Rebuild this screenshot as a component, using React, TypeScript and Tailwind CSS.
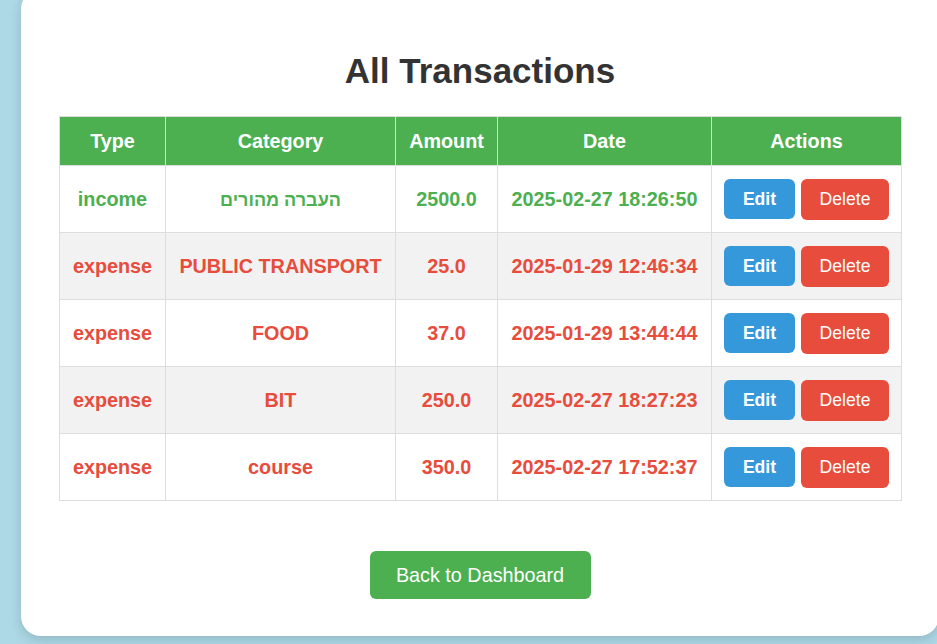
import React from "react";

type Tx = { type: "income" | "expense"; category: string; amount: string; date: string };

const rows: Tx[] = [
  { type: "income", category: "העברה מהורים", amount: "2500.0", date: "2025-02-27 18:26:50" },
  { type: "expense", category: "PUBLIC TRANSPORT", amount: "25.0", date: "2025-01-29 12:46:34" },
  { type: "expense", category: "FOOD", amount: "37.0", date: "2025-01-29 13:44:44" },
  { type: "expense", category: "BIT", amount: "250.0", date: "2025-02-27 18:27:23" },
  { type: "expense", category: "course", amount: "350.0", date: "2025-02-27 17:52:37" },
];

const isHebrew = (s: string) => /[\u0590-\u05FF]/.test(s);

export default function App() {
  return (
    <div
      className="h-[644px] w-[937px] overflow-hidden bg-[#add8e6]"
      style={{ fontFamily: '"Liberation Sans", Arial, "DejaVu Sans", sans-serif' }}
    >
      <div className="ml-[21px] mt-[-11px] w-[918px] rounded-[20px] bg-white px-[38px] pb-[37px] pt-[62px] shadow-[0_4px_12px_rgba(0,0,0,0.15)]">
        <h2 className="mb-[25px] text-center text-[35px] font-bold leading-[40px] text-[#333333]">
          All Transactions
        </h2>
        <table className="w-[842px] table-fixed border-collapse text-[19.8px] font-bold">
          <thead>
            <tr className="h-[49px] bg-[#4caf50] text-white">
              <th className="w-[106px] border border-[#dddddd] p-0 pt-[2px]">Type</th>
              <th className="w-[230px] border border-[#dddddd] p-0 pt-[2px]">Category</th>
              <th className="w-[102px] border border-[#dddddd] p-0 pt-[2px]">Amount</th>
              <th className="w-[214px] border border-[#dddddd] p-0 pt-[2px]">Date</th>
              <th className="w-[190px] border border-[#dddddd] p-0 pt-[2px]">Actions</th>
            </tr>
          </thead>
          <tbody>
            {rows.map((r, i) => {
              const color = r.type === "income" ? "text-[#4caf50]" : "text-[#e74c3c]";
              const bg = i % 2 === 1 ? "bg-[#f2f2f2]" : "bg-white";
              return (
                <tr key={i} className={`h-[67px] ${bg} ${color}`}>
                  <td className="border border-[#dddddd] p-0 pt-[2px] text-center">{r.type}</td>
                  <td className="border border-[#dddddd] p-0 pt-[2px] text-center">
                    {isHebrew(r.category) ? (
                      <span className="text-[18px]">{r.category}</span>
                    ) : (
                      r.category
                    )}
                  </td>
                  <td className="border border-[#dddddd] p-0 pt-[2px] text-center">{r.amount}</td>
                  <td className="border border-[#dddddd] p-0 pt-[2px] text-center">{r.date}</td>
                  <td className="border border-[#dddddd] p-0 text-center">
                    <div className="flex items-start justify-center gap-[6px]">
                      <button className="h-[40px] w-[71px] rounded-[6px] bg-[#3498db] text-[17.6px] font-bold leading-[20px] text-white">
                        Edit
                      </button>
                      <button className="h-[41px] w-[88px] rounded-[6px] bg-[#e74c3c] text-[17.6px] font-normal leading-[20px] text-white">
                        Delete
                      </button>
                    </div>
                  </td>
                </tr>
              );
            })}
          </tbody>
        </table>
        <div className="mt-[50px] flex justify-center">
          <button className="h-[48px] w-[221px] rounded-[6px] bg-[#4caf50] text-[19.8px] leading-[24px] text-white">
            Back to Dashboard
          </button>
        </div>
      </div>
    </div>
  );
}
